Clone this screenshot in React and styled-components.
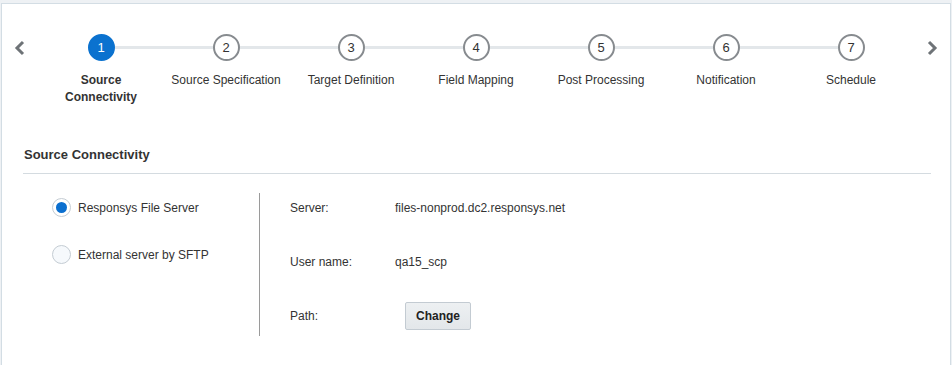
import React from "react";
import styled, { createGlobalStyle } from "styled-components";

const GlobalStyle = createGlobalStyle`
  html,body{margin:0;padding:0;background:#eef1f4;}
  body{font-family:"Liberation Sans",Arial,sans-serif;color:#333;}
  *{box-sizing:border-box;}
`;

const Page = styled.div`
  padding:3px 1px 0 1px;
  height:365px;
  overflow:hidden;
`;

const Panel = styled.div`
  background:#fff;
  border:1px solid #d3dde4;
  border-bottom:none;
  height:100%;
`;

const StepperRow = styled.div`
  display:flex;
  align-items:flex-start;
  padding-top:30px;
  height:120px;
`;

const Arrow = styled.button`
  width:${p => p.$w}px;
  height:27px;
  padding:0;
  border:0;
  background:none;
  display:flex;
  align-items:center;
  justify-content:center;
  cursor:pointer;
`;

const StepList = styled.div`
  display:flex;
`;

const Step = styled.div`
  width:125px;
  display:flex;
  flex-direction:column;
  align-items:center;
`;

const StepTop = styled.div`
  width:100%;
  height:27px;
  display:flex;
  align-items:center;
`;

const Track = styled.div`
  flex:1;
  height:3px;
  background:${p => (p.$hidden ? "transparent" : "#e3e7ea")};
`;

const Circle = styled.div`
  width:27px;height:27px;
  border-radius:50%;
  display:flex;align-items:center;justify-content:center;
  font-size:13px;
  border:2px solid ${p => (p.$active ? "#0b72cf" : "#878b8f")};
  background:${p => (p.$active ? "#0b72cf" : "#fff")};
  color:${p => (p.$active ? "#fff" : "#333")};
`;

const StepLabel = styled.div`
  margin-top:11px;
  font-size:12px;
  line-height:17px;
  text-align:center;
  font-weight:${p => (p.$active ? "bold" : "normal")};
  color:#333;
  max-width:${p => (p.$active ? "80px" : "none")};
  white-space:${p => (p.$active ? "normal" : "nowrap")};
`;

const Section = styled.div`
  padding:0 19px 0 21px;
`;

const SectionTitle = styled.h2`
  margin:0;
  font-size:13px;
  font-weight:bold;
  color:#333;
  line-height:17px;
  padding:22px 0 10px 1px;
  border-bottom:1px solid #d4dbe0;
`;

const Body = styled.div`
  display:flex;
  margin-top:19px;
`;

const OptionCol = styled.div`
  width:236px;
  padding:1px 0 0 29px;
  display:flex;
  flex-direction:column;
  gap:20px;
`;

const RadioRow = styled.label`
  display:flex;
  align-items:center;
  height:27px;
  font-size:12px;
  color:#333;
  gap:7px;
  cursor:pointer;
`;

const Radio = styled.span`
  width:19px;height:19px;
  border-radius:50%;
  border:1px solid #c4ccd3;
  background:${p => (p.$checked ? "#fff" : "#f6f9fc")};
  display:flex;align-items:center;justify-content:center;
  &::after{
    content:"";
    width:11px;height:11px;border-radius:50%;
    background:${p => (p.$checked ? "#0b6fcf" : "transparent")};
  }
`;

const DetailCol = styled.div`
  border-left:1px solid #9a9a9a;
  padding:1px 0 7px 30px;
  display:flex;
  flex-direction:column;
  gap:27px;
`;

const DetailRow = styled.div`
  display:flex;
  align-items:center;
  height:27px;
  font-size:12px;
  color:#333;
`;

const DetailLabel = styled.span`
  width:105px;
`;

const ChangeButton = styled.button`
  margin-left:10px;
  width:66px;height:28px;
  font-family:"Liberation Sans",Arial,sans-serif;
  font-size:12px;
  font-weight:bold;
  color:#222;
  background:linear-gradient(#edf0f2,#e3e7ea);
  border:1px solid #c3cbd2;
  border-radius:2px;
  cursor:pointer;
`;

const Chevron = ({ dir }) => (
  <svg width="12" height="16" viewBox="0 0 12 16">
    <polyline
      points={dir === "left" ? "9,2 3,8 9,14" : "3,2 9,8 3,14"}
      fill="none"
      stroke="#6e7377"
      strokeWidth="3"
    />
  </svg>
);

const steps = [
  "Source Connectivity",
  "Source Specification",
  "Target Definition",
  "Field Mapping",
  "Post Processing",
  "Notification",
  "Schedule",
];

export default function App() {
  return (
    <Page>
      <GlobalStyle />
      <Panel>
        <StepperRow>
          <Arrow $w={38}><Chevron dir="left" /></Arrow>
          <StepList>
            {steps.map((s, i) => (
              <Step key={s}>
                <StepTop>
                  <Track $hidden={i === 0} />
                  <Circle $active={i === 0}>{i + 1}</Circle>
                  <Track $hidden={i === steps.length - 1} />
                </StepTop>
                <StepLabel $active={i === 0}>{s}</StepLabel>
              </Step>
            ))}
          </StepList>
          <Arrow $w={38}><Chevron dir="right" /></Arrow>
        </StepperRow>
        <Section>
          <SectionTitle>Source Connectivity</SectionTitle>
          <Body>
            <OptionCol>
              <RadioRow><Radio $checked />Responsys File Server</RadioRow>
              <RadioRow><Radio />External server by SFTP</RadioRow>
            </OptionCol>
            <DetailCol>
              <DetailRow><DetailLabel>Server:</DetailLabel>files-nonprod.dc2.responsys.net</DetailRow>
              <DetailRow><DetailLabel>User name:</DetailLabel>qa15_scp</DetailRow>
              <DetailRow><DetailLabel>Path:</DetailLabel><ChangeButton>Change</ChangeButton></DetailRow>
            </DetailCol>
          </Body>
        </Section>
      </Panel>
    </Page>
  );
}
